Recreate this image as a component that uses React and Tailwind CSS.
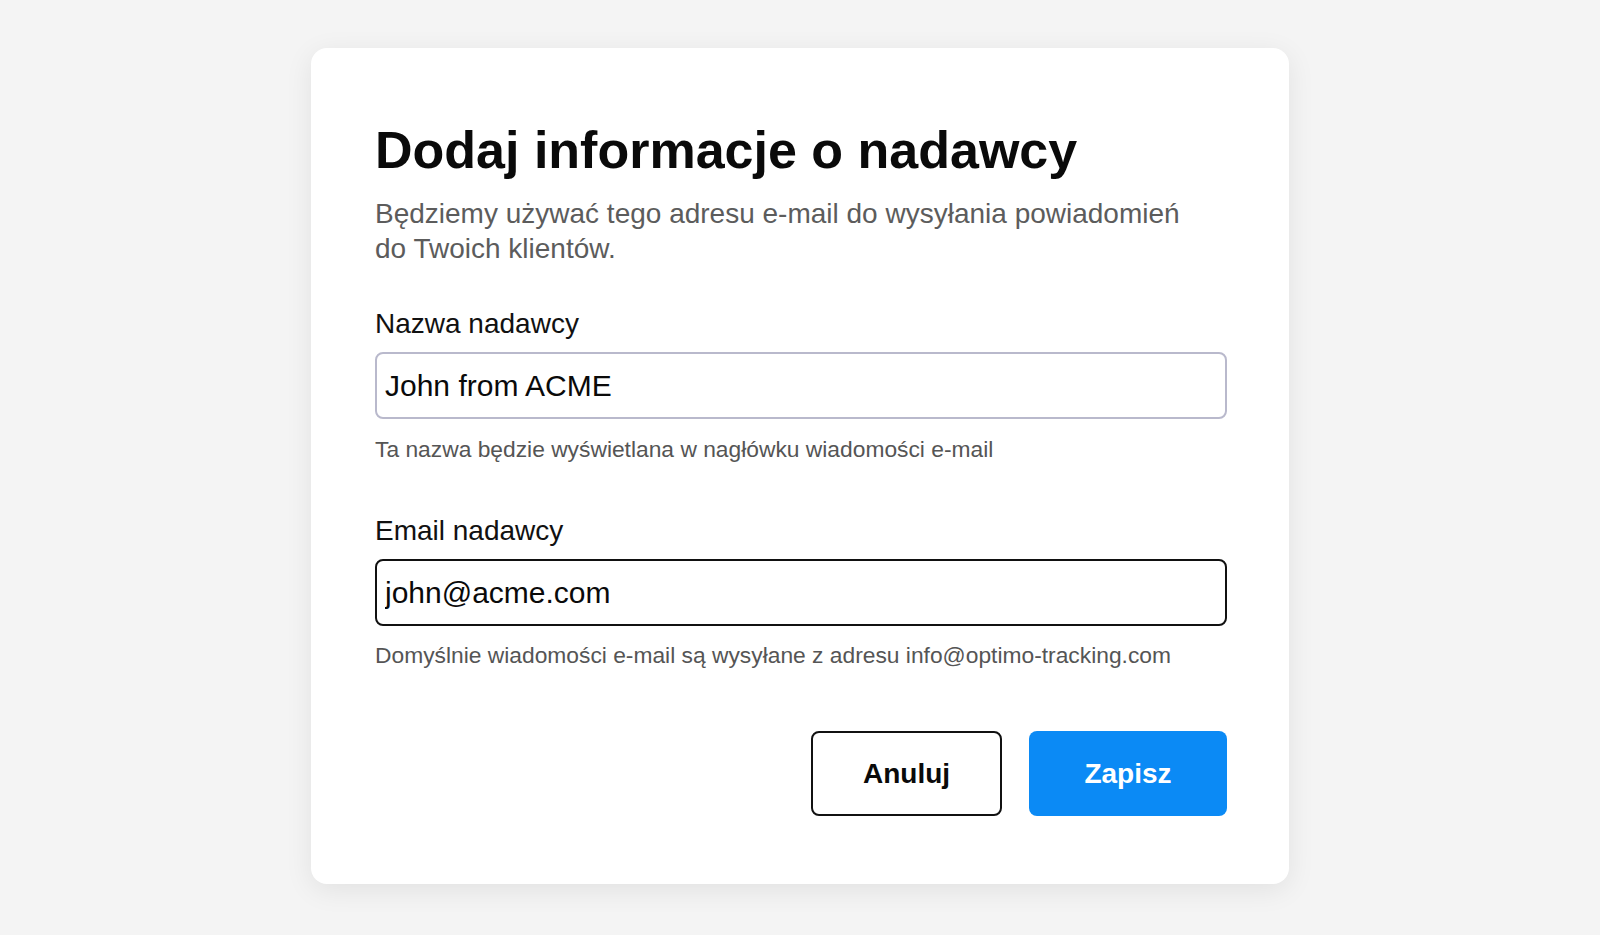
import { useState } from 'react';

export default function App() {
  const [name, setName] = useState('John from ACME');
  const [email, setEmail] = useState('john@acme.com');

  return (
    <div className="min-h-screen bg-[#f4f4f4] flex justify-center pt-[48px] font-['Liberation_Sans',Arial,sans-serif]">
      <div className="w-[978px] h-[836px] bg-white rounded-[16px] shadow-[0_6px_28px_rgba(0,0,0,0.08)] pt-[72px] pl-[64px] pr-[62px]">
        <h1 className="text-[52px] leading-[60px] font-bold text-[#0a0a0a]">
          Dodaj informacje o nadawcy
        </h1>
        <p className="mt-[16px] text-[28px] leading-[35px] text-[#5c5c5c] max-w-[820px]">
          Będziemy używać tego adresu e-mail do wysyłania powiadomień do Twoich klientów.
        </p>

        <label className="block mt-[40px] text-[28px] leading-[35px] text-[#111]">
          Nazwa nadawcy
        </label>
        <input
          value={name}
          onChange={(e) => setName(e.target.value)}
          className="mt-[11px] w-full h-[67px] px-[8px] rounded-[8px] border-2 border-[#b9b9cc] text-[30px] text-[#0a0a0a] outline-none"
        />
        <p className="mt-[15px] text-[22.8px] leading-[30px] text-[#555]">
          Ta nazwa będzie wyświetlana w nagłówku wiadomości e-mail
        </p>

        <label className="block mt-[49px] text-[28px] leading-[35px] text-[#111]">
          Email nadawcy
        </label>
        <input
          value={email}
          onChange={(e) => setEmail(e.target.value)}
          className="mt-[11px] w-full h-[67px] px-[8px] rounded-[8px] border-2 border-[#111] text-[30px] text-[#0a0a0a] outline-none"
        />
        <p className="mt-[14px] text-[22.8px] leading-[30px] text-[#555]">
          Domyślnie wiadomości e-mail są wysyłane z adresu info@optimo-tracking.com
        </p>

        <div className="mt-[61px] flex justify-end gap-[27px]">
          <button className="w-[191px] h-[85px] rounded-[8px] border-2 border-[#111] bg-white text-[28px] font-bold text-[#0a0a0a]">
            Anuluj
          </button>
          <button className="w-[198px] h-[85px] rounded-[8px] bg-[#0b8af5] text-[28px] font-bold text-white">
            Zapisz
          </button>
        </div>
      </div>
    </div>
  );
}
